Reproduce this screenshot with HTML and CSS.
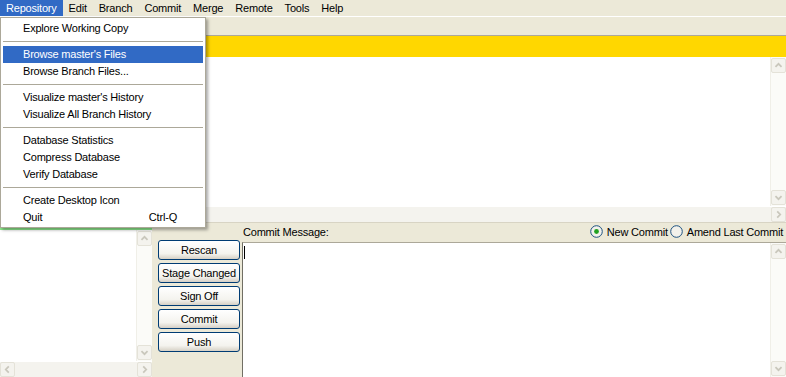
FILE: index.html
```html
<!DOCTYPE html>
<html lang="en">
<head>
    <meta charset="UTF-8">
    <meta name="viewport" content="width=device-width, initial-scale=1.0">
    <title>Git Gui</title>
    <link rel="stylesheet" href="styles.css">
</head>
<body>

<div class="menubar">
    <span class="menu-title open">Repository</span>
    <span class="menu-title">Edit</span>
    <span class="menu-title">Branch</span>
    <span class="menu-title">Commit</span>
    <span class="menu-title">Merge</span>
    <span class="menu-title">Remote</span>
    <span class="menu-title">Tools</span>
    <span class="menu-title">Help</span>
</div>
<div class="branch-bar"></div>

<div class="panes">
    <div class="file-lists">
        <!-- both list headers sit under the open menu -->
        <div class="list-header unstaged"></div>
        <div class="list-box unstaged-box"></div>
        <div class="list-header staged"></div>
        <div class="list-box staged-box">
            <div class="scroll-row">
                <div class="list-area"></div>
                <div class="vscroll">
                    <span class="sb-btn"><svg viewBox="0 0 15 15"><path d="M4 9l3.5-3.5L11 9"/></svg></span>
                    <span class="sb-btn"><svg viewBox="0 0 15 15"><path d="M4 6l3.5 3.5L11 6"/></svg></span>
                </div>
            </div>
            <div class="hscroll">
                <span class="sb-btn"><svg viewBox="0 0 15 15"><path d="M9 4L5.5 7.5 9 11"/></svg></span>
                <span class="sb-btn"><svg viewBox="0 0 15 15"><path d="M6 4l3.5 3.5L6 11"/></svg></span>
            </div>
        </div>
    </div>

    <div class="sash"></div>

    <div class="work">
        <div class="diff">
            <div class="diff-header"></div>
            <div class="scroll-row diff-body">
                <div class="diff-text"></div>
                <div class="vscroll">
                    <span class="sb-btn"><svg viewBox="0 0 15 15"><path d="M4 9l3.5-3.5L11 9"/></svg></span>
                    <span class="sb-btn"><svg viewBox="0 0 15 15"><path d="M4 6l3.5 3.5L11 6"/></svg></span>
                </div>
            </div>
            <div class="hscroll">
                <span class="sb-btn"><svg viewBox="0 0 15 15"><path d="M9 4L5.5 7.5 9 11"/></svg></span>
                <span class="sb-btn"><svg viewBox="0 0 15 15"><path d="M6 4l3.5 3.5L6 11"/></svg></span>
            </div>
        </div>

        <div class="commit-area">
            <div class="commit-buttons">
                <button>Rescan</button>
                <button>Stage Changed</button>
                <button>Sign Off</button>
                <button>Commit</button>
                <button>Push</button>
            </div>
            <div class="commit-message">
                <div class="message-header">
                    <span>Commit Message:</span>
                    <span class="radios">
                        <span class="radio">
                            <svg viewBox="0 0 13 13"><circle cx="6.5" cy="6.5" r="5.8" class="ring"/><circle cx="6.5" cy="6.5" r="2.4" class="dot"/></svg>
                            New Commit
                        </span>
                        <span class="radio">
                            <svg viewBox="0 0 13 13"><circle cx="6.5" cy="6.5" r="5.8" class="ring"/></svg>
                            Amend Last Commit
                        </span>
                    </span>
                </div>
                <div class="scroll-row message-body">
                    <div class="message-text"><span class="caret"></span></div>
                    <div class="vscroll">
                        <span class="sb-btn"><svg viewBox="0 0 15 15"><path d="M4 9l3.5-3.5L11 9"/></svg></span>
                        <span class="sb-btn"><svg viewBox="0 0 15 15"><path d="M4 6l3.5 3.5L11 6"/></svg></span>
                    </div>
                </div>
            </div>
        </div>
    </div>
</div>

<!-- open Repository menu, drawn over the window -->
<div class="dropdown">
    <div class="menu-entry">Explore Working Copy</div>
    <div class="menu-sep"></div>
    <div class="menu-entry active">Browse master's Files</div>
    <div class="menu-entry">Browse Branch Files...</div>
    <div class="menu-sep"></div>
    <div class="menu-entry">Visualize master's History</div>
    <div class="menu-entry">Visualize All Branch History</div>
    <div class="menu-sep"></div>
    <div class="menu-entry">Database Statistics</div>
    <div class="menu-entry">Compress Database</div>
    <div class="menu-entry">Verify Database</div>
    <div class="menu-sep"></div>
    <div class="menu-entry">Create Desktop Icon</div>
    <div class="menu-entry"><span>Quit</span><span class="accel">Ctrl-Q</span></div>
</div>

</body>
</html>
```

FILE: styles.css
```css
* {
    box-sizing: border-box;
}
body {
    margin: 0;
    width: 786px;
    height: 377px;
    overflow: hidden;
    position: relative;
    background-color: #ECE9D8;
    font-family: "Liberation Sans", Arial, sans-serif;
    font-size: 11px;
    letter-spacing: -0.2px;
    color: #000;
}

/* menu bar */
.menubar {
    display: flex;
    height: 17px;
    border-bottom: 1px solid #fff;
}
.menu-title {
    padding: 0 6px;
    line-height: 16px;
}
.menu-title.open {
    background-color: #316AC5;
    color: #fff;
}
.branch-bar {
    height: 18px;
}

/* main panes */
.panes {
    display: flex;
    height: 342px;
}
.file-lists {
    width: 152px;
    display: flex;
    flex-direction: column;
}
.list-header {
    height: 18px;
}
.list-header.unstaged {
    background-color: #FFA07A;
}
.list-header.staged {
    background-color: #90EE90;
}
.list-box {
    background-color: #fff;
}
.unstaged-box {
    flex: 1;
}
.staged-box {
    height: 147px;
    display: flex;
    flex-direction: column;
}
.scroll-row {
    display: flex;
    flex: 1;
}
.list-area, .diff-text, .message-text {
    flex: 1;
    background-color: #fff;
}
.sash {
    width: 3px;
}
.work {
    flex: 1;
    display: flex;
    flex-direction: column;
}

/* scrollbars (disabled look) */
.vscroll {
    width: 16px;
    display: flex;
    flex-direction: column;
    justify-content: space-between;
    align-items: flex-end;
    padding: 1px 0;
    background-color: #FBFBF8;
    border-left: 1px solid #F0EFE8;
}
.hscroll {
    height: 16px;
    display: flex;
    justify-content: space-between;
    align-items: flex-end;
    background-color: #F4F3EE;
    border-top: 1px solid #fff;
}
.sb-btn {
    width: 15px;
    height: 15px;
    background-color: #F4F3EE;
    border: 1px solid #E4E2D8;
    border-radius: 2px;
}
.sb-btn svg {
    display: block;
    width: 13px;
    height: 13px;
}
.sb-btn path {
    fill: none;
    stroke: #C9C7BC;
    stroke-width: 2;
}

/* diff viewer */
.diff {
    flex: 1;
    display: flex;
    flex-direction: column;
    border-top: 1px solid #ACA899;
}
.diff-header {
    height: 21px;
    background-color: #FFD700;
}

/* commit area */
.commit-area {
    height: 155px;
    display: flex;
    border-top: 1px solid #D8D4C4;
}
.commit-buttons {
    width: 87px;
    padding: 17px 0 0 3px;
    display: flex;
    flex-direction: column;
    gap: 3px;
}
.commit-buttons button {
    width: 82px;
    height: 20px;
    padding: 0;
    font-family: inherit;
    font-size: 11px;
    letter-spacing: -0.2px;
    color: #000;
    border: 1px solid #003C74;
    border-radius: 3px;
    background: linear-gradient(#FFFFFF, #F4F3EE 70%, #D6D0C5);
}
.commit-message {
    flex: 1;
    display: flex;
    flex-direction: column;
}
.message-header {
    height: 19px;
    display: flex;
    justify-content: space-between;
    align-items: center;
    padding: 0 3px 2px 1px;
}
.radios {
    display: flex;
    gap: 2px;
}
.radio {
    display: flex;
    align-items: center;
    gap: 4px;
}
.radio svg {
    width: 13px;
    height: 13px;
}
.radio .ring {
    fill: #F2F1EB;
    stroke: #1C5180;
    stroke-width: 1;
}
.radio .dot {
    fill: #21A121;
}
.message-body {
    border-top: 1px solid #ACA899;
    border-left: 1px solid #716F64;
}
.message-text {
    padding: 3px 0 0 1px;
}
.caret {
    display: block;
    width: 1px;
    height: 13px;
    background-color: #000;
}

/* dropped-down Repository menu */
.dropdown {
    position: absolute;
    left: 0;
    top: 17px;
    width: 206px;
    padding: 2px 2px 1px;
    background-color: #fff;
    border: 1px solid #ACA899;
    box-shadow: 2px 2px 3px rgba(0, 0, 0, 0.35);
}
.menu-entry {
    display: flex;
    justify-content: space-between;
    height: 17px;
    line-height: 17px;
    padding: 0 26px 0 20px;
}
.menu-entry.active {
    background-color: #316AC5;
    color: #fff;
}
.menu-sep {
    margin: 4px 0 3px;
    border-top: 1px solid #ACA899;
    border-bottom: 1px solid #fff;
}
```
